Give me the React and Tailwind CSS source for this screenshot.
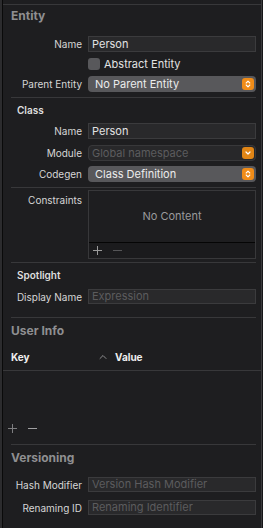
const font = { fontFamily: 'Inter, "Noto Sans", sans-serif' }

function Divider() {
  return <div className="ml-[8px] mr-[5px] h-px bg-[#38383a]" />
}

function Label({ children }) {
  return <div className="w-[85px] shrink-0 pr-[6px] text-right text-[10px] text-[#d6d6d6] leading-none">{children}</div>
}

function Row({ label, children, className = '' }) {
  return (
    <div className={`flex items-center pr-[5px] ${className}`}>
      <Label>{label}</Label>
      <div className="flex-1 min-w-0">{children}</div>
    </div>
  )
}

function TextField({ value, placeholder, h = 'h-[16px]' }) {
  return (
    <div className={`${h} flex items-center px-[3px] bg-[#29292b] border border-[#3b3b3d] text-[11px] leading-none`}>
      {value ? <span className="text-[#e2e2e2]">{value}</span> : <span className="text-[#5c5c5e]">{placeholder}</span>}
    </div>
  )
}

function Stepper({ down, dim }) {
  return (
    <div className={`w-[12px] h-[12px] rounded-[3px] flex items-center justify-center ${dim ? 'bg-[#e08516]' : 'bg-[#f08c18]'}`}>
      {down ? (
        <svg width="8" height="8" viewBox="0 0 8 8" fill="none">
          <path d="M2 3l2 2 2-2" stroke="white" strokeWidth="1.2" strokeLinecap="round" strokeLinejoin="round" />
        </svg>
      ) : (
        <svg width="8" height="10" viewBox="0 0 8 10" fill="none">
          <path d="M2.2 4L4 2.2 5.8 4M2.2 6L4 7.8 5.8 6" stroke="white" strokeWidth="1.1" strokeLinecap="round" strokeLinejoin="round" />
        </svg>
      )}
    </div>
  )
}

function Popup({ value, disabled }) {
  return (
    <div
      className={`h-[16px] flex items-center justify-between rounded-[4px] text-[11px] leading-none ${
        disabled ? 'bg-[#28282a] border border-[#38383a] pl-[3px] pr-px' : 'bg-[#58585b] pl-[7px] pr-[2px]'
      }`}
    >
      <span className={disabled ? 'text-[#5c5c5e]' : 'text-[#ececec]'}>{value}</span>
      <Stepper down={disabled} dim={disabled} />
    </div>
  )
}

function PlusMinus({ minusColor = 'bg-[#8a8a8a]', plusColor = 'bg-[#8a8a8a]' }) {
  return (
    <div className="flex items-center gap-[11px]">
      <div className="relative w-[9px] h-[9px]">
        <div className={`absolute left-0 top-[4px] w-[9px] h-px ${plusColor}`} />
        <div className={`absolute left-[4px] top-0 w-px h-[9px] ${plusColor}`} />
      </div>
      <div className={`w-[9px] h-px ${minusColor}`} />
    </div>
  )
}

export default function App() {
  return (
    <div className="w-[263px] h-[528px] bg-[#1e1e20] flex overflow-hidden" style={font}>
      <div className="w-[2px] bg-[#2c2c2e]" />
      <div className="w-px bg-[#0a0a0a]" />

      <div className="flex-1 flex flex-col">
        <div className="h-[4px]" />
        <div className="h-px bg-[#38383a]" />

        {/* Entity */}
        <div className="h-[22px] flex items-center pl-[8px] text-[12px] font-bold text-[#8f8f91]">Entity</div>
        <Row label="Name" className="mt-[9px]">
          <TextField value="Person" />
        </Row>
        <Row label="" className="mt-[6px] h-[12px]">
          <div className="flex items-center gap-[4px]">
            <div className="w-[12px] h-[12px] rounded-[3px] bg-[#58585b]" />
            <span className="text-[11px] leading-none text-[#e2e2e2]">Abstract Entity</span>
          </div>
        </Row>
        <Row label="Parent Entity" className="mt-[6px]">
          <Popup value="No Parent Entity" />
        </Row>
        <div className="mt-[5px]">
          <Divider />
        </div>

        {/* Class */}
        <div className="h-[24px] flex items-center pl-[14px] text-[10px] font-semibold text-[#dedede]">Class</div>
        <Row label="Name" className="mt-px">
          <TextField value="Person" />
        </Row>
        <Row label="Module" className="mt-[6px]">
          <Popup value="Global namespace" disabled />
        </Row>
        <Row label="Codegen" className="mt-[5px]">
          <Popup value="Class Definition" />
        </Row>
        <div className="mt-[5px]">
          <Divider />
        </div>

        {/* Constraints */}
        <div className="mt-[2px] flex items-start pr-[5px]">
          <div className="w-[85px] shrink-0 pr-[6px] pt-[5px] text-right text-[10px] leading-none text-[#d6d6d6]">Constraints</div>
          <div className="flex-1 h-[69px] border border-[#38383a] flex flex-col">
            <div className="flex-1 flex items-center justify-center text-[11px] text-[#9a9a9c]">No Content</div>
            <div className="h-px bg-[#050505]" />
            <div className="h-[15px] bg-[#1b1b1d] flex items-center pl-[4px]">
              <PlusMinus plusColor="bg-[#9a9a9a]" minusColor="bg-[#555557]" />
            </div>
          </div>
        </div>
        <div className="mt-[3px]">
          <Divider />
        </div>

        {/* Spotlight */}
        <div className="h-[24px] flex items-center pl-[14px] text-[10px] font-semibold text-[#dedede]">Spotlight</div>
        <Row label="Display Name" className="mt-[2px]">
          <TextField placeholder="Expression" h="h-[15px]" />
        </Row>
        <div className="mt-[13px]">
          <Divider />
        </div>

        {/* User Info */}
        <div className="h-[26px] flex items-center pl-[8px] text-[12px] font-bold text-[#8f8f91]">User Info</div>
        <div className="h-[26px] flex items-center text-[10px] font-bold text-[#eeeeee]">
          <span className="pl-[8px] w-[96px]">Key</span>
          <svg width="8" height="6" viewBox="0 0 8 6" fill="none" className="mr-[8px]">
            <path d="M1 4.5L4 1.5 7 4.5" stroke="#8c8c8e" strokeWidth="1" strokeLinecap="round" strokeLinejoin="round" />
          </svg>
          <span>Value</span>
        </div>
        <div className="h-px bg-[#38383a] mr-[-1px]" />
        <div className="h-[49px]" />
        <div className="h-[16px] flex items-center pl-[5px]">
          <PlusMinus plusColor="bg-[#7e7e80]" minusColor="bg-[#a0a0a2]" />
        </div>
        <div className="mt-[8px]">
          <Divider />
        </div>

        {/* Versioning */}
        <div className="h-[26px] flex items-center pl-[8px] text-[12px] font-bold text-[#8f8f91]">Versioning</div>
        <Row label="Hash Modifier" className="mt-[6px]">
          <TextField placeholder="Version Hash Modifier" h="h-[15px]" />
        </Row>
        <Row label="Renaming ID" className="mt-[8px]">
          <TextField placeholder="Renaming Identifier" h="h-[15px]" />
        </Row>
      </div>

      <div className="w-px bg-[#3a3a3c]" />
      <div className="w-px bg-[#161618]" />
    </div>
  )
}
